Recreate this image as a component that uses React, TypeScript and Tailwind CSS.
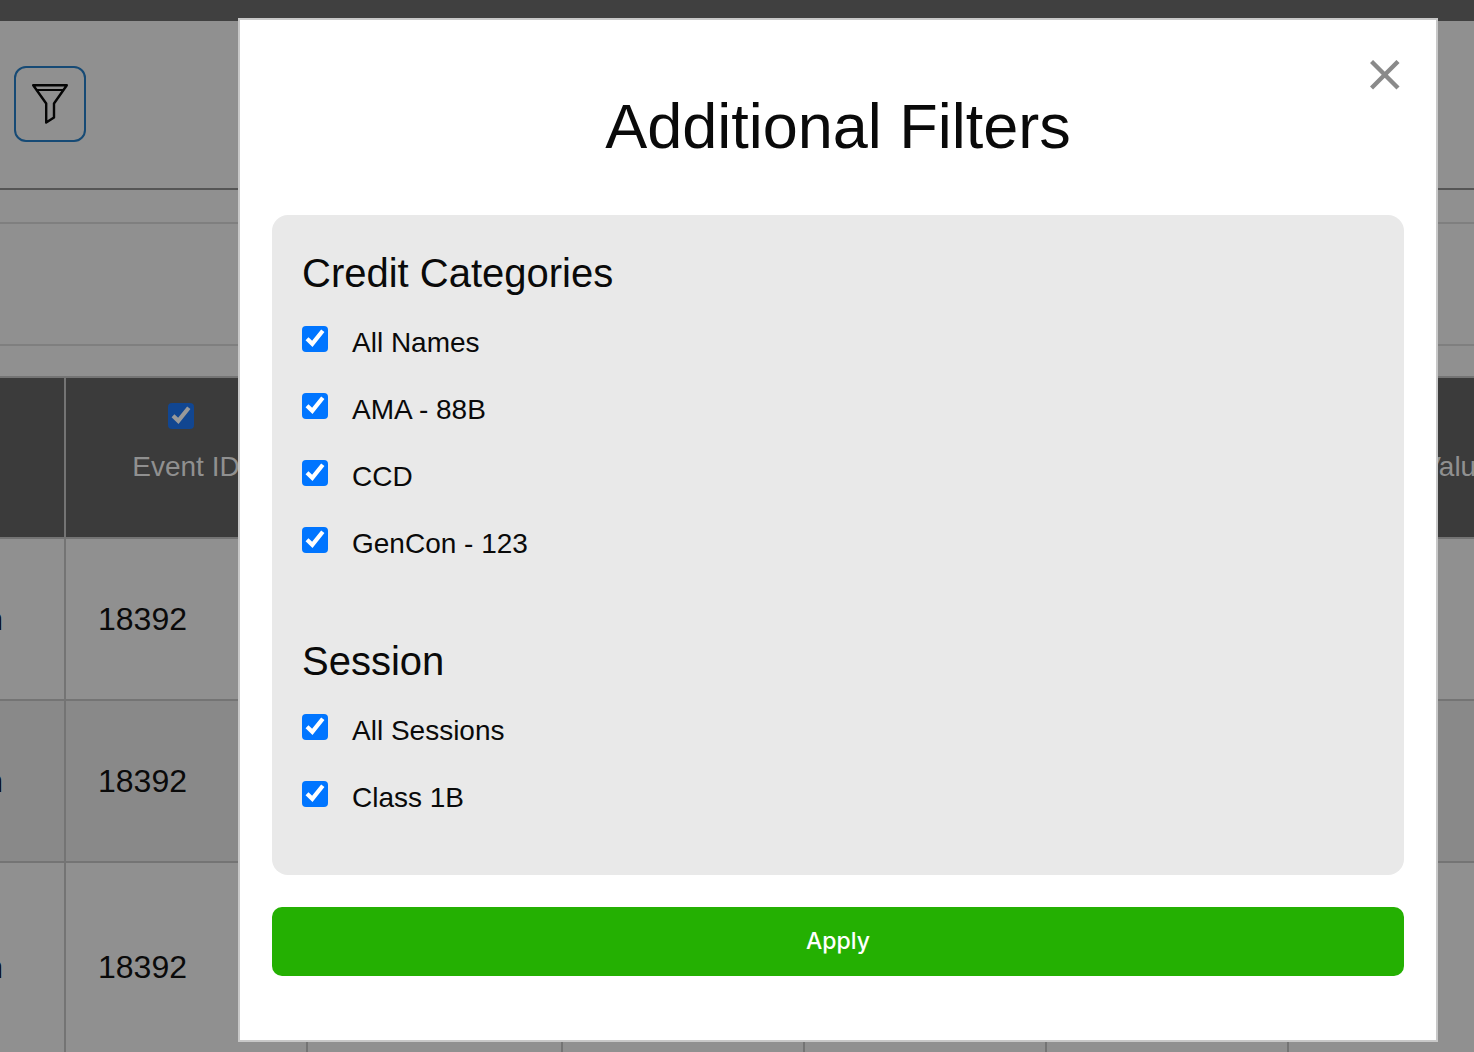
function Check({ dimmed = false }: { dimmed?: boolean }) {
  return (
    <span className="grid size-[26px] shrink-0">
      <input
        type="checkbox"
        defaultChecked
        className={
          dimmed
            ? "peer col-start-1 row-start-1 size-full appearance-none rounded-sm border border-[#3b6fb0] bg-transparent checked:border-0 checked:bg-[#114691]"
            : "peer col-start-1 row-start-1 size-full appearance-none rounded-sm border border-gray-500 bg-white checked:border-0 checked:bg-[#0075ff]"
        }
      />
      <svg
        viewBox="0 0 26 26"
        aria-hidden="true"
        className={
          dimmed
            ? "pointer-events-none invisible col-start-1 row-start-1 size-full text-[#999999] peer-checked:visible"
            : "pointer-events-none invisible col-start-1 row-start-1 size-full text-white peer-checked:visible"
        }
      >
        <path d="M5 12.8 10.3 17.8 20.8 4.8" fill="none" stroke="currentColor" strokeWidth="4.2" />
      </svg>
    </span>
  );
}

function FilterOption({ label }: { label: string }) {
  return (
    <label className="flex items-start gap-6 text-[28px] leading-[34px]">
      <Check />
      {label}
    </label>
  );
}

function FilterGroup({ title, options }: { title: string; options: string[] }) {
  return (
    <fieldset>
      <legend className="mb-[30px] text-[40px] leading-[46px]">{title}</legend>
      <div className="flex flex-col gap-[33px]">
        {options.map((option) => (
          <FilterOption key={option} label={option} />
        ))}
      </div>
    </fieldset>
  );
}

const rows = [
  { id: "18392", className: "h-[162px]" },
  { id: "18392", className: "h-[162px] bg-[#898989]" },
  { id: "18392", className: "h-[210px]" },
];

const cell = "border-r-2 border-b-2 border-[#747474] p-0";

function EventsTable() {
  return (
    <table className="-ml-40 w-[1787px] table-fixed border-separate border-spacing-0 border-t-2 border-[#747474]">
      <colgroup>
        <col className="w-[226px]" />
        <col className="w-[242px]" />
        <col className="w-[255px]" />
        <col className="w-[242px]" />
        <col className="w-[242px]" />
        <col className="w-[242px]" />
        <col className="w-[338px]" />
      </colgroup>
      <thead>
        <tr className="h-[161px] bg-[#3b3b3b] text-[28px] leading-8 text-[#909090]">
          <th className={cell} />
          <th className={cell}>
            <label className="flex flex-col items-center gap-[22px] pb-[30px] font-normal">
              <span className="pr-2.5">
                <Check dimmed />
              </span>
              Event ID
            </label>
          </th>
          <th className={cell} />
          <th className={cell} />
          <th className={cell} />
          <th className={cell} />
          <th className={cell}>
            <span className="block pt-[18px] font-normal">Value</span>
          </th>
        </tr>
      </thead>
      <tbody>
        {rows.map((row, index) => (
          <tr key={index} className={row.className}>
            <td className="border-r-2 border-b-2 border-[#747474] p-0 pr-[61px] text-right text-[32px]">n</td>
            <td className="border-r-2 border-b-2 border-[#747474] p-0 pl-8 text-[32px]">{row.id}</td>
            <td className={cell} />
            <td className={cell} />
            <td className={cell} />
            <td className={cell} />
            <td className={cell} />
          </tr>
        ))}
      </tbody>
    </table>
  );
}

function FiltersDialog() {
  return (
    <div
      role="dialog"
      aria-modal="true"
      aria-labelledby="filters-title"
      className="border-2 border-[#c8c8c8] bg-white px-8 pt-10 pb-16"
    >
      <div className="flex justify-end pr-1">
        <button type="button" aria-label="Close" className="size-[30px] text-[#8a8a8a]">
          <svg viewBox="0 0 30 30" className="size-full" aria-hidden="true">
            <path d="M1.5 1.5 28 28M28 1.5 1.5 28" stroke="currentColor" strokeWidth="4.4" />
          </svg>
        </button>
      </div>
      <h2 id="filters-title" className="mb-[53px] text-center text-[63px] leading-[72px]">
        Additional Filters
      </h2>
      <div className="flex flex-col gap-[77px] rounded-2xl bg-[#e9e9e9] px-[30px] pt-[35px] pb-[60px]">
        <FilterGroup title="Credit Categories" options={["All Names", "AMA - 88B", "CCD", "GenCon - 123"]} />
        <FilterGroup title="Session" options={["All Sessions", "Class 1B"]} />
      </div>
      <button
        type="button"
        className="mt-8 h-[69px] w-full rounded-[10px] bg-[#24b002] font-[Inter,sans-serif] text-[23px] font-medium text-white"
      >
        Apply
      </button>
    </div>
  );
}

export default function App() {
  return (
    <div className="relative h-screen overflow-hidden bg-[#909090] font-['Liberation_Sans',Arial,sans-serif] text-[#0a0a0a]">
      <header className="h-[21px] bg-[#404040]" />
      <div className="border-b-2 border-[#555555] px-3.5 pt-[45px] pb-[46px]">
        <button
          type="button"
          aria-label="Filters"
          className="flex h-[76px] w-[72px] items-center justify-center rounded-xl border-2 border-[#164a75]"
        >
          <svg viewBox="0 0 36 40" className="h-10 w-9" fill="none" stroke="#050505" strokeWidth="2.4" strokeLinejoin="round" aria-hidden="true">
            <path d="M1.2 1.2H34.8L22 19.5V33.5L14.2 38.6V19.5Z" />
            <path d="M4 6H32" strokeWidth="2" />
          </svg>
        </button>
      </div>
      <div className="mt-8 mb-[30px] h-[124px] border-y-2 border-[#7f7f7f]" />
      <EventsTable />
      <div className="absolute inset-0 pt-[18px] pr-9 pl-[238px]">
        <FiltersDialog />
      </div>
    </div>
  );
}
